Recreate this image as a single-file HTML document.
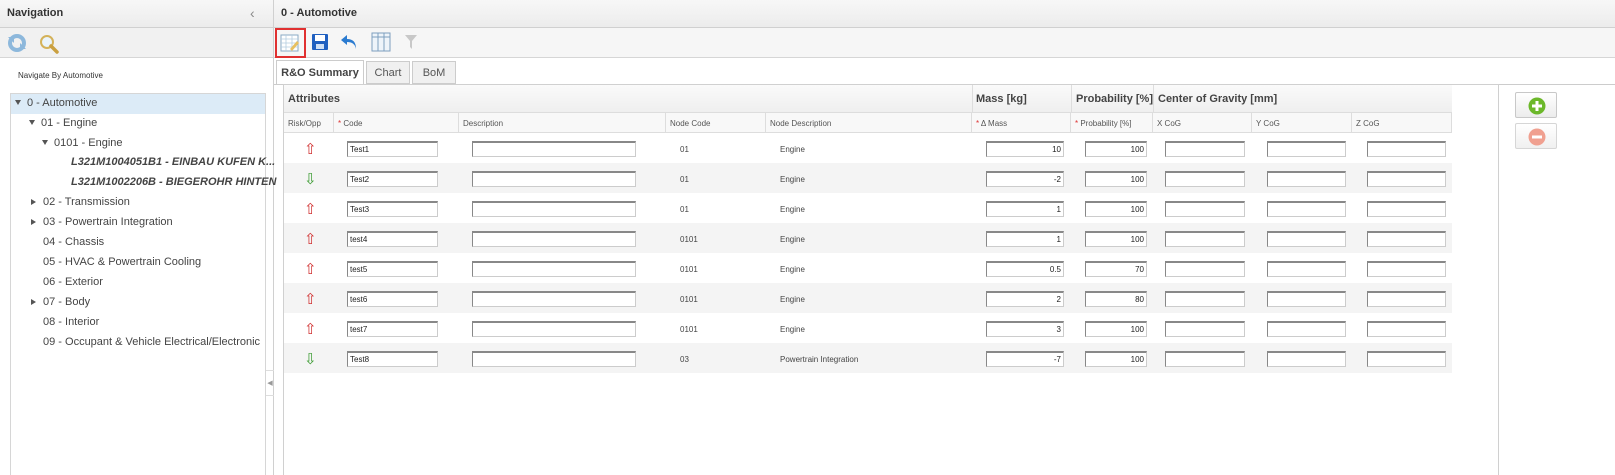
<!DOCTYPE html>
<html><head><style>
*{box-sizing:border-box;margin:0;padding:0}
body{width:1615px;height:475px;overflow:hidden;background:#fff;font-family:"Liberation Sans",Arial,sans-serif;color:#333;position:relative}
.abs{position:absolute}
.hdr{background:linear-gradient(#f7f7f7,#ececec);border-bottom:1px solid #d0d0d0;font-weight:bold;font-size:11px;color:#333;padding:7px 7px;height:28px}
.tb{background:#f1f1f1;border-bottom:1px solid #d6d6d6;height:30px}
.tree div{position:absolute;font-size:11px;color:#444;white-space:nowrap}
.tri{display:inline-block;width:0;height:0;border-left:3.5px solid transparent;border-right:3.5px solid transparent;border-top:5px solid #555;margin-right:6px;vertical-align:1px}
.trr{display:inline-block;width:0;height:0;border-top:3.5px solid transparent;border-bottom:3.5px solid transparent;border-left:5px solid #555;margin-right:7px;vertical-align:0}
.grid{position:absolute;left:283px;top:84px;width:1216px;height:391px;border:1px solid #d0d0d0;border-bottom:none}
.gh{position:absolute;font-size:11px;font-weight:bold;color:#444}
.ch{position:absolute;top:28px;height:20px;font-size:8px;color:#555;padding:6px 4px;border-right:1px solid #ddd;background:#f8f8f8;border-bottom:1px solid #ddd}
.row{position:absolute;left:0;width:1168px;height:30px;font-size:8px;color:#444}
.row.alt{background:#f4f4f4}
.row span,.row i{position:absolute}
.inp{position:absolute;top:8px;height:16px;background:#fff;border:1px solid #ccc;border-top:2px solid #888;border-left:1px solid #888;font-size:8px;padding:2px 2px;color:#222}
.r{text-align:right}
.star{color:#d33}
</style></head><body>
<div class="abs" style="left:0;top:0;width:274px;height:475px;border-right:1px solid #d0d0d0">
<div class="hdr">Navigation<span style="position:absolute;left:250px;top:5px;font-weight:normal;color:#888;font-size:14px">&#8249;</span></div>
<div class="tb" style="position:relative">
 <svg class="abs" style="left:6px;top:5px" width="22" height="20" viewBox="0 0 22 20"><circle cx="11" cy="10" r="7" fill="none" stroke="#8db8dc" stroke-width="4"/><path d="M2 4h6v6z" fill="#8db8dc"/><path d="M20 16h-6v-6z" fill="#8db8dc"/></svg>
 <svg class="abs" style="left:38px;top:5px" width="22" height="22" viewBox="0 0 22 22"><circle cx="9" cy="9" r="6" fill="#eaf4fb" stroke="#d4b25a" stroke-width="2"/><path d="M13 13l6 6" stroke="#caa040" stroke-width="3.5" stroke-linecap="round"/></svg>
</div>
<div class="abs" style="left:18px;top:71px;font-size:8px;color:#333">Navigate By Automotive</div>
<div class="abs tree" style="left:10px;top:93px;width:256px;height:382px;border:1px solid #d6d6d6;border-bottom:none">
 <div style="left:0;top:0;width:254px;height:20px;background:#dcebf7"></div>
 <div style="left:4px;top:3px"><span class="tri"></span>0 - Automotive</div>
 <div style="left:18px;top:23px"><span class="tri"></span>01 - Engine</div>
 <div style="left:31px;top:43px"><span class="tri"></span>0101 - Engine</div>
 <div style="left:60px;top:62px;font-weight:bold;font-style:italic">L321M1004051B1 - EINBAU KUFEN K...</div>
 <div style="left:60px;top:82px;font-weight:bold;font-style:italic">L321M1002206B - BIEGEROHR HINTEN</div>
 <div style="left:20px;top:102px"><span class="trr"></span>02 - Transmission</div>
 <div style="left:20px;top:122px"><span class="trr"></span>03 - Powertrain Integration</div>
 <div style="left:32px;top:142px">04 - Chassis</div>
 <div style="left:32px;top:162px">05 - HVAC &amp; Powertrain Cooling</div>
 <div style="left:32px;top:182px">06 - Exterior</div>
 <div style="left:20px;top:202px"><span class="trr"></span>07 - Body</div>
 <div style="left:32px;top:222px">08 - Interior</div>
 <div style="left:32px;top:242px">09 - Occupant &amp; Vehicle Electrical/Electronic</div>
</div>
</div>
<div class="abs" style="left:266px;top:370px;width:8px;height:26px;border-top:1px solid #ddd;border-bottom:1px solid #ddd;font-size:7px;color:#999;text-align:center;line-height:26px">&#9664;</div>
<div class="abs" style="left:274px;top:0;width:1341px;height:475px">
<div class="hdr">0 - Automotive</div>
<div class="tb" style="position:relative;background:#f6f6f6">
 <div class="abs" style="left:1px;top:0;width:31px;height:30px;border:2px solid #e03030"></div>
 <svg class="abs" style="left:6px;top:5px" width="20" height="20" viewBox="0 0 20 20"><rect x="1" y="2" width="17" height="16" fill="#fff" stroke="#8aa9c4"/><path d="M1 6h17M1 10h17M1 14h17M6 2v16M12 2v16" stroke="#b5cde0" stroke-width=".8"/><path d="M10 16l7-8 2 2-7 8z" fill="#e8c060"/></svg>
 <svg class="abs" style="left:37px;top:5px" width="18" height="18" viewBox="0 0 18 18"><rect x="1" y="1" width="16" height="16" rx="1" fill="#2060c0"/><rect x="4" y="2" width="10" height="6" fill="#fff"/><rect x="5" y="11" width="8" height="5" fill="#cfe0f5"/></svg>
 <svg class="abs" style="left:66px;top:5px" width="18" height="18" viewBox="0 0 18 18"><path d="M7 2L1 7l6 5V9c5 0 8 2 9 7 0-7-3-10-9-10z" fill="#2b7bd0"/></svg>
 <svg class="abs" style="left:97px;top:4px" width="20" height="20" viewBox="0 0 20 20"><rect x="1" y="1" width="18" height="18" fill="#eef4fa" stroke="#7d9fbf"/><path d="M7 1v18M13 1v18" stroke="#7d9fbf"/><path d="M1 5h18" stroke="#7d9fbf"/></svg>
 <svg class="abs" style="left:130px;top:6px" width="14" height="16" viewBox="0 0 14 16"><path d="M1 1h12L8 7v8L6 13V7z" fill="#c8c8c8"/></svg>
</div>
<div class="abs" style="left:2px;top:60px;width:88px;height:25px;border:1px solid #ccc;border-bottom:none;background:#fff;font-size:11px;font-weight:bold;color:#444;text-align:center;line-height:24px">R&amp;O Summary</div>
<div class="abs" style="left:92px;top:61px;width:44px;height:23px;border:1px solid #ccc;background:#f0f0f0;font-size:11px;color:#555;text-align:center;line-height:22px">Chart</div>
<div class="abs" style="left:138px;top:61px;width:44px;height:23px;border:1px solid #ccc;background:#f0f0f0;font-size:11px;color:#555;text-align:center;line-height:22px">BoM</div>
<div class="abs" style="left:0;top:84px;width:1341px;border-top:1px solid #ccc"></div>
</div>
<div class="grid">
 <div class="abs" style="left:0;top:0;width:1168px;height:28px;background:linear-gradient(#fafafa,#efefef);border-bottom:1px solid #ddd"></div>
 <div class="abs" style="left:688px;top:0;height:28px;border-left:1px solid #ddd"></div>
 <div class="abs" style="left:787px;top:0;height:28px;border-left:1px solid #ddd"></div>
 <div class="abs" style="left:869px;top:0;height:28px;border-left:1px solid #ddd"></div>
 <div class="gh" style="left:4px;top:8px">Attributes</div>
 <div class="gh" style="left:692px;top:8px">Mass [kg]</div>
 <div class="gh" style="left:792px;top:8px">Probability [%]</div>
 <div class="gh" style="left:874px;top:8px">Center of Gravity [mm]</div>
 <div class="ch" style="left:0;width:50px">Risk/Opp</div>
 <div class="ch" style="left:50px;width:125px"><span class="star">*</span> Code</div>
 <div class="ch" style="left:175px;width:207px">Description</div>
 <div class="ch" style="left:382px;width:100px">Node Code</div>
 <div class="ch" style="left:482px;width:206px">Node Description</div>
 <div class="ch" style="left:688px;width:99px"><span class="star">*</span> Δ Mass</div>
 <div class="ch" style="left:787px;width:82px"><span class="star">*</span> Probability [%]</div>
 <div class="ch" style="left:869px;width:99px">X CoG</div>
 <div class="ch" style="left:968px;width:100px">Y CoG</div>
 <div class="ch" style="left:1068px;width:100px">Z CoG</div>
 <div class="row" style="top:48px"><i style="left:20px;top:7px;color:#d03030;font-size:15px;font-style:normal">⇧</i><div class="inp" style="left:63px;width:91px">Test1</div><div class="inp" style="left:188px;width:164px"></div><span style="left:396px;top:12px">01</span><span style="left:496px;top:12px">Engine</span><div class="inp r" style="left:702px;width:78px">10</div><div class="inp r" style="left:801px;width:62px">100</div><div class="inp" style="left:881px;width:80px"></div><div class="inp" style="left:983px;width:79px"></div><div class="inp" style="left:1083px;width:79px"></div></div>
 <div class="row alt" style="top:78px"><i style="left:20px;top:7px;color:#3a9a30;font-size:15px;font-style:normal">⇩</i><div class="inp" style="left:63px;width:91px">Test2</div><div class="inp" style="left:188px;width:164px"></div><span style="left:396px;top:12px">01</span><span style="left:496px;top:12px">Engine</span><div class="inp r" style="left:702px;width:78px">-2</div><div class="inp r" style="left:801px;width:62px">100</div><div class="inp" style="left:881px;width:80px"></div><div class="inp" style="left:983px;width:79px"></div><div class="inp" style="left:1083px;width:79px"></div></div>
 <div class="row" style="top:108px"><i style="left:20px;top:7px;color:#d03030;font-size:15px;font-style:normal">⇧</i><div class="inp" style="left:63px;width:91px">Test3</div><div class="inp" style="left:188px;width:164px"></div><span style="left:396px;top:12px">01</span><span style="left:496px;top:12px">Engine</span><div class="inp r" style="left:702px;width:78px">1</div><div class="inp r" style="left:801px;width:62px">100</div><div class="inp" style="left:881px;width:80px"></div><div class="inp" style="left:983px;width:79px"></div><div class="inp" style="left:1083px;width:79px"></div></div>
 <div class="row alt" style="top:138px"><i style="left:20px;top:7px;color:#d03030;font-size:15px;font-style:normal">⇧</i><div class="inp" style="left:63px;width:91px">test4</div><div class="inp" style="left:188px;width:164px"></div><span style="left:396px;top:12px">0101</span><span style="left:496px;top:12px">Engine</span><div class="inp r" style="left:702px;width:78px">1</div><div class="inp r" style="left:801px;width:62px">100</div><div class="inp" style="left:881px;width:80px"></div><div class="inp" style="left:983px;width:79px"></div><div class="inp" style="left:1083px;width:79px"></div></div>
 <div class="row" style="top:168px"><i style="left:20px;top:7px;color:#d03030;font-size:15px;font-style:normal">⇧</i><div class="inp" style="left:63px;width:91px">test5</div><div class="inp" style="left:188px;width:164px"></div><span style="left:396px;top:12px">0101</span><span style="left:496px;top:12px">Engine</span><div class="inp r" style="left:702px;width:78px">0.5</div><div class="inp r" style="left:801px;width:62px">70</div><div class="inp" style="left:881px;width:80px"></div><div class="inp" style="left:983px;width:79px"></div><div class="inp" style="left:1083px;width:79px"></div></div>
 <div class="row alt" style="top:198px"><i style="left:20px;top:7px;color:#d03030;font-size:15px;font-style:normal">⇧</i><div class="inp" style="left:63px;width:91px">test6</div><div class="inp" style="left:188px;width:164px"></div><span style="left:396px;top:12px">0101</span><span style="left:496px;top:12px">Engine</span><div class="inp r" style="left:702px;width:78px">2</div><div class="inp r" style="left:801px;width:62px">80</div><div class="inp" style="left:881px;width:80px"></div><div class="inp" style="left:983px;width:79px"></div><div class="inp" style="left:1083px;width:79px"></div></div>
 <div class="row" style="top:228px"><i style="left:20px;top:7px;color:#d03030;font-size:15px;font-style:normal">⇧</i><div class="inp" style="left:63px;width:91px">test7</div><div class="inp" style="left:188px;width:164px"></div><span style="left:396px;top:12px">0101</span><span style="left:496px;top:12px">Engine</span><div class="inp r" style="left:702px;width:78px">3</div><div class="inp r" style="left:801px;width:62px">100</div><div class="inp" style="left:881px;width:80px"></div><div class="inp" style="left:983px;width:79px"></div><div class="inp" style="left:1083px;width:79px"></div></div>
 <div class="row alt" style="top:258px"><i style="left:20px;top:7px;color:#3a9a30;font-size:15px;font-style:normal">⇩</i><div class="inp" style="left:63px;width:91px">Test8</div><div class="inp" style="left:188px;width:164px"></div><span style="left:396px;top:12px">03</span><span style="left:496px;top:12px">Powertrain Integration</span><div class="inp r" style="left:702px;width:78px">-7</div><div class="inp r" style="left:801px;width:62px">100</div><div class="inp" style="left:881px;width:80px"></div><div class="inp" style="left:983px;width:79px"></div><div class="inp" style="left:1083px;width:79px"></div></div>
</div>
<div class="abs" style="left:1515px;top:92px;width:42px;height:26px;border:1px solid #c8c8c8;border-radius:2px;background:linear-gradient(#fff,#ececec)"><svg class="abs" style="left:12px;top:4px" width="18" height="18" viewBox="0 0 18 18"><circle cx="9" cy="9" r="8.5" fill="#6cb82a"/><path d="M9 4v10M4 9h10" stroke="#fff" stroke-width="3"/></svg></div>
<div class="abs" style="left:1515px;top:123px;width:42px;height:26px;border:1px solid #d6d6d6;border-radius:2px;background:linear-gradient(#fff,#f0f0f0)"><svg class="abs" style="left:12px;top:4px" width="18" height="18" viewBox="0 0 18 18"><circle cx="9" cy="9" r="8.5" fill="#f0a090"/><path d="M4 9h10" stroke="#fff" stroke-width="3"/></svg></div>
</body></html>
